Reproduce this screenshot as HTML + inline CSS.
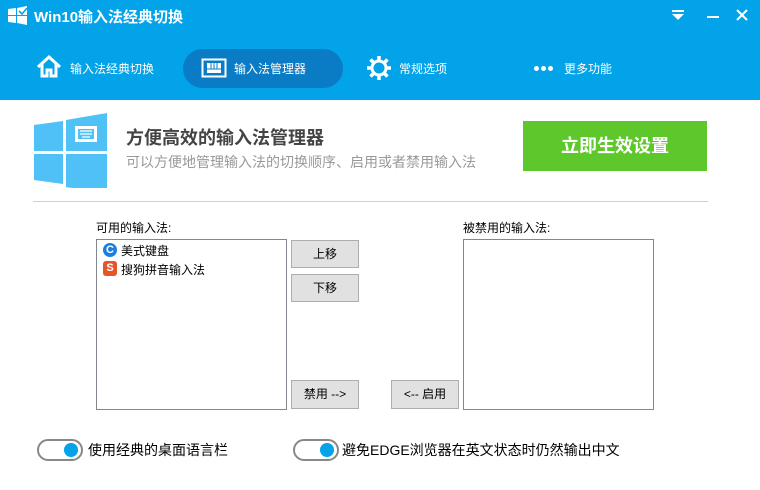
<!DOCTYPE html>
<html><head><meta charset="utf-8"><style>
*{margin:0;padding:0;box-sizing:border-box}
body{width:760px;height:490px;background:#fff;font-family:"Liberation Sans","Noto Sans CJK SC",sans-serif;position:relative;overflow:hidden;font-size:12px;color:#000}
.a{position:absolute}
#hd{left:0;top:0;width:760px;height:100px;background:#02a3e9}
.w{color:#fff}
.btn{position:absolute;background:#e1e1e1;border:1px solid #adadad;font-size:12px;text-align:center;line-height:26px}
.box{position:absolute;border:1px solid #828790;background:#fff}
.tg{position:absolute;width:46px;height:22px;border:2px solid #888;border-radius:11px;background:#fff}
.tg i{position:absolute;right:3px;top:2px;width:14px;height:14px;border-radius:50%;background:#02a3e9}
.dot{position:absolute;width:5px;height:5px;border-radius:50%;background:#fff;top:66px}
</style></head><body>
<div id="hd" class="a">
<svg class="a" style="left:7px;top:5px" width="22" height="22" viewBox="0 0 22 22"><path d="M1 4l8-1v7H1zM10 3l10-2v9H10zM1 11h8v7l-8-1zM10 11h10v9l-10-2z" fill="#fff"/><path d="M12 6l3 3 5-6" stroke="#02a3e9" stroke-width="1.6" fill="none"/></svg>
<div class="a w" style="left:34px;top:6px;font-size:15px;font-weight:bold">Win10输入法经典切换</div>
<svg class="a" style="left:670px;top:8px" width="16" height="16"><rect x="2" y="2" width="12" height="2" fill="#fff"/><path d="M2 6h12l-6 6z" fill="#fff"/></svg>
<div class="a" style="left:707px;top:16px;width:12px;height:2px;background:#fff"></div>
<svg class="a" style="left:735px;top:8px" width="14" height="14"><path d="M2 2l10 10M12 2L2 12" stroke="#fff" stroke-width="2"/></svg>
<svg class="a" style="left:36px;top:55px" width="26" height="24" viewBox="0 0 26 24"><path d="M2 12L13 2l11 10M6 9v12h5v-6h4v6h5V9" stroke="#fff" stroke-width="3" fill="none"/></svg>
<div class="a w" style="left:70px;top:60px;font-size:12px">输入法经典切换</div>
<div class="a" style="left:183px;top:49px;width:160px;height:39px;border-radius:20px;background:#0a7cc6"></div>
<svg class="a" style="left:201px;top:58px" width="26" height="22"><rect x="1.5" y="1.5" width="23" height="17" stroke="#fff" stroke-width="2" fill="none"/><rect x="6" y="5" width="14" height="10" fill="#fff"/><path d="M10 5v6M13 5v6M16 5v6M6 11h14" stroke="#0a7cc6" stroke-width="1"/></svg>
<div class="a w" style="left:234px;top:60px;font-size:12px">输入法管理器</div>
<svg class="a" style="left:366px;top:55px" width="26" height="26" viewBox="0 0 26 26"><circle cx="13" cy="13" r="7" stroke="#fff" stroke-width="3" fill="none"/><path d="M13 1v5M13 20v5M1 13h5M20 13h5M4.5 4.5l3.5 3.5M18 18l3.5 3.5M4.5 21.5L8 18M18 8l3.5-3.5" stroke="#fff" stroke-width="3.5"/></svg>
<div class="a w" style="left:399px;top:60px;font-size:12px">常规选项</div>
<div class="dot" style="left:534px"></div><div class="dot" style="left:541px"></div><div class="dot" style="left:548px"></div>
<div class="a w" style="left:564px;top:60px;font-size:12px">更多功能</div>
</div>
<svg class="a" style="left:34px;top:113px" width="75" height="75" viewBox="0 0 75 75"><path d="M0 12l29-4v30H0zM32 7l41-7v38H32zM0 41h29v30L0 67zM32 41h41v40L32 74z" fill="#4fc1f6"/><rect x="41" y="13" width="22" height="16" fill="#fff"/><rect x="44" y="16" width="16" height="10" fill="#4fc1f6"/><path d="M46 18h12M46 21h12M48 24h8" stroke="#fff" stroke-width="1.3"/></svg>
<div class="a" style="left:126px;top:124px;font-size:18px;font-weight:bold;color:#444">方便高效的输入法管理器</div>
<div class="a" style="left:126px;top:152px;font-size:14px;color:#999">可以方便地管理输入法的切换顺序、启用或者禁用输入法</div>
<div class="a" style="left:523px;top:121px;width:184px;height:50px;background:#5ec72c;color:#fff;font-size:18px;font-weight:bold;text-align:center;line-height:50px">立即生效设置</div>
<div class="a" style="left:33px;top:201px;width:675px;height:1px;background:#d0d0d0"></div>
<div class="a" style="left:96px;top:219px">可用的输入法:</div>
<div class="box" style="left:96px;top:239px;width:191px;height:171px"></div>
<div class="a" style="left:103px;top:243px;width:14px;height:14px;border-radius:50%;background:#1b7fe0;color:#fff;font-size:11px;font-weight:bold;line-height:14px;text-align:center">C</div>
<div class="a" style="left:121px;top:242px">美式键盘</div>
<div class="a" style="left:103px;top:261px;width:14px;height:15px;border-radius:3px;background:#e8532a;color:#fff;font-size:11px;font-weight:bold;line-height:15px;text-align:center">S</div>
<div class="a" style="left:121px;top:261px">搜狗拼音输入法</div>
<div class="btn" style="left:291px;top:240px;width:68px;height:28px">上移</div>
<div class="btn" style="left:291px;top:274px;width:68px;height:28px">下移</div>
<div class="btn" style="left:291px;top:380px;width:68px;height:29px">禁用 --&gt;</div>
<div class="btn" style="left:391px;top:380px;width:68px;height:29px">&lt;-- 启用</div>
<div class="a" style="left:463px;top:219px">被禁用的输入法:</div>
<div class="box" style="left:463px;top:239px;width:191px;height:171px"></div>
<div class="tg" style="left:37px;top:439px"><i></i></div>
<div class="a" style="left:88px;top:440px;font-size:14px">使用经典的桌面语言栏</div>
<div class="tg" style="left:293px;top:439px"><i></i></div>
<div class="a" style="left:342px;top:440px;font-size:14px">避免EDGE浏览器在英文状态时仍然输出中文</div>
</body></html>
